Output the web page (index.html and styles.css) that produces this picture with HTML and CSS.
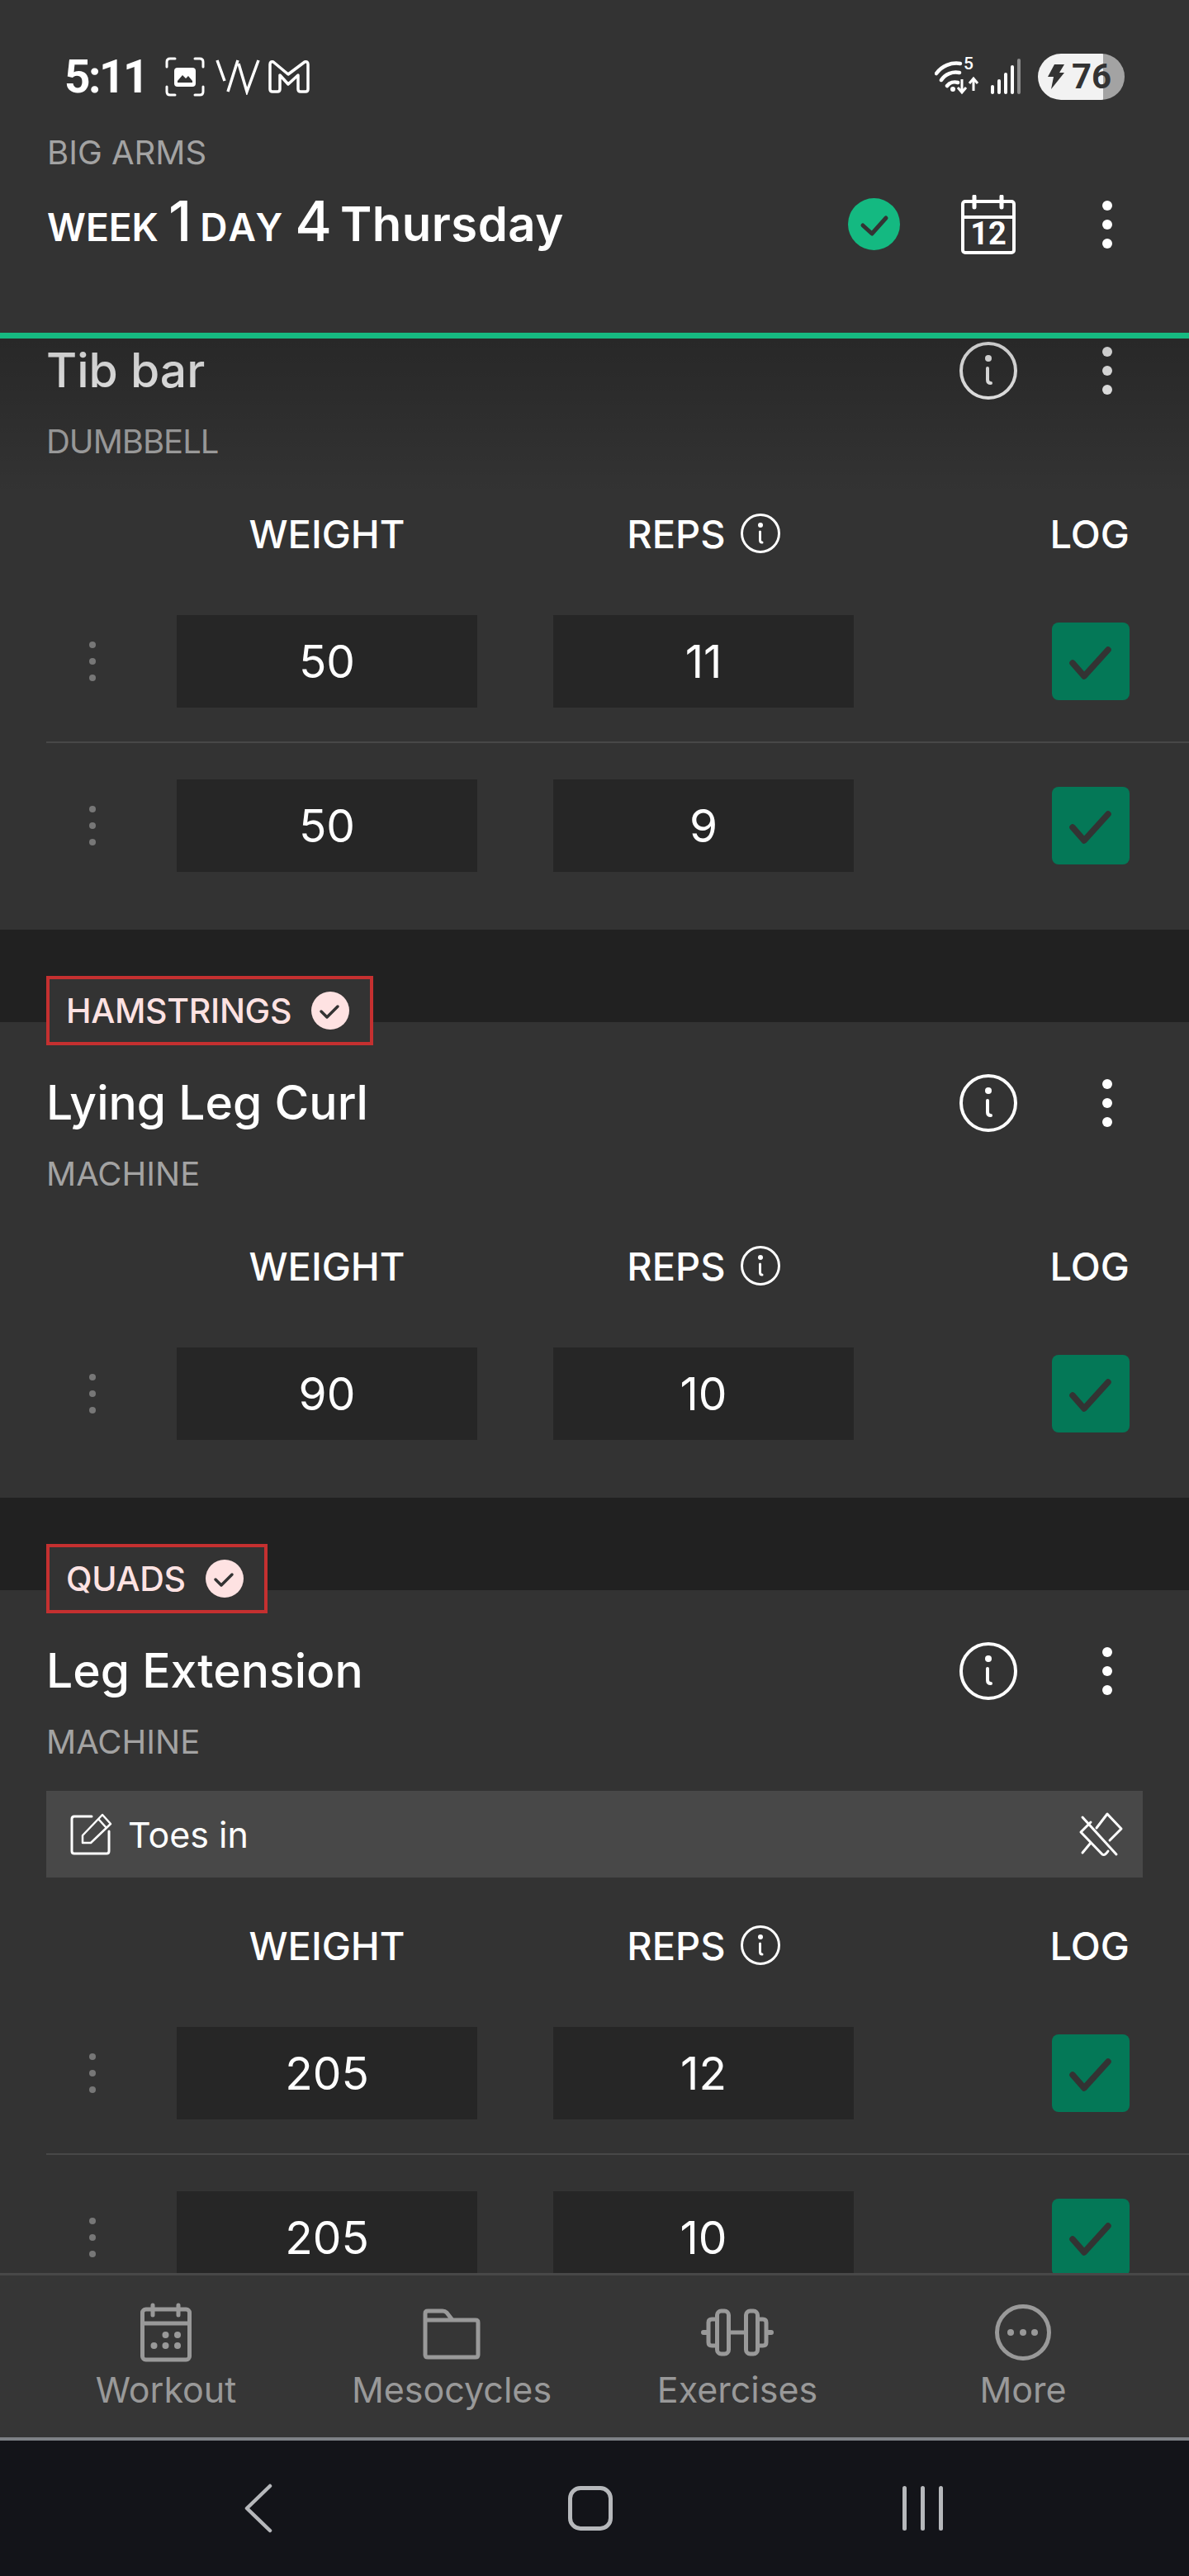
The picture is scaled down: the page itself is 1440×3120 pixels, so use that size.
FILE: index.html
```html
<!DOCTYPE html>
<html lang="en">
<head>
    <meta charset="UTF-8">
    <meta name="viewport" content="width=device-width, initial-scale=1.0">
    <title>Big Arms - Week 1 Day 4</title>
    <link rel="stylesheet" href="styles.css">
</head>
<body>

    <!-- Icons used more than once -->
    <svg class="sprite" aria-hidden="true">
        <symbol id="icon-info" viewBox="0 0 70 70">
            <circle cx="35" cy="35" r="33" fill="none" stroke="currentColor" stroke-width="4"/>
            <circle cx="35" cy="20" r="4" fill="currentColor"/>
            <path d="M34 32 V46 Q34 50 38 50" fill="none" stroke="currentColor" stroke-width="4" stroke-linecap="round"/>
        </symbol>
        <symbol id="icon-info-small" viewBox="0 0 48 48">
            <circle cx="24" cy="24" r="22.500" fill="none" stroke="currentColor" stroke-width="3"/>
            <circle cx="24" cy="14" r="3" fill="currentColor"/>
            <path d="M23.500 22 V32 Q23.500 35 26 35" fill="none" stroke="currentColor" stroke-width="3" stroke-linecap="round"/>
        </symbol>
        <symbol id="icon-kebab" viewBox="0 0 12 58">
            <circle cx="6" cy="6" r="6" fill="currentColor"/>
            <circle cx="6" cy="29" r="6" fill="currentColor"/>
            <circle cx="6" cy="52" r="6" fill="currentColor"/>
        </symbol>
        <symbol id="icon-check" viewBox="0 0 94 94">
            <path d="M25 49 L39 65 L68 33" fill="none" stroke="currentColor" stroke-width="7.500" stroke-linecap="round" stroke-linejoin="round"/>
        </symbol>
    </svg>

    <div class="phone">

        <!-- Status bar and title -->
        <header class="top-bar">
            <div class="status-bar">
                <span class="status-time">5:11</span>
                <svg class="status-shot" viewBox="0 0 48 48">
                    <path d="M2 12 V6 Q2 2 6 2 H12 M36 2 H42 Q46 2 46 6 V12 M46 36 V42 Q46 46 42 46 H36 M12 46 H6 Q2 46 2 42 V36" fill="none" stroke="#fff" stroke-width="3" stroke-linecap="round"/>
                    <rect x="11" y="13" width="26" height="23" rx="4" fill="#fff"/>
                    <path d="M15 29 L21 22 L25 26 L28 23 L33 29 V31 H15 Z" fill="#333"/>
                </svg>
                <svg class="status-w" viewBox="0 0 54 44">
                    <path d="M2 2 L11 27 M27 2 L15 40 M28 6 L38 40 L52 2" fill="none" stroke="#fff" stroke-width="3.500"/>
                </svg>
                <svg class="status-m" viewBox="0 0 52 43">
                    <path d="M3 36 V6 Q3 2 7 3 L25 18 L45 3 Q49 2 49 6 V36 Q49 39 46 39 H40 Q37 39 37 36 V19 L25 30 L15 19 V36 Q15 39 12 39 H6 Q3 39 3 36 Z" fill="none" stroke="#fff" stroke-width="3.500" stroke-linejoin="round"/>
                </svg>
                <div class="status-right">
                    <svg class="status-wifi" viewBox="0 0 58 44">
                        <path d="M2 18 A30 30 0 0 1 31 6 M8 26 A21 21 0 0 1 30 17 M15 33 A12 12 0 0 1 28 29" fill="none" stroke="#fff" stroke-width="4.500" stroke-linecap="round"/>
                        <circle cx="22" cy="37" r="3" fill="#fff"/>
                        <path d="M33 25 V40 M28 35 L33 41 L38 35 M47 39 V25 M42 30 L47 24 L52 30" fill="none" stroke="#fff" stroke-width="3"/>
                    </svg>
                    <span class="status-wifi-num">5</span>
                    <svg class="status-signal" viewBox="0 0 38 44">
                        <rect x="1" y="32" width="4" height="11" rx="2" fill="#fff"/>
                        <rect x="9" y="25" width="4" height="18" rx="2" fill="#fff"/>
                        <rect x="17" y="17" width="4" height="26" rx="2" fill="#fff"/>
                        <rect x="25" y="8" width="4" height="35" rx="2" fill="#fff"/>
                        <rect x="33" y="0" width="4" height="43" rx="2" fill="#8c8c8c"/>
                    </svg>
                    <div class="battery">
                        <svg class="battery-bolt" viewBox="0 0 20 30">
                            <path d="M8 0 H20 L14 10 H20 L4 30 L7 15 H0 Z" fill="#333"/>
                        </svg>
                        <span class="battery-num">76</span>
                    </div>
                </div>
            </div>

            <div class="workout-title">
                <div class="title-text">
                    <div class="meso-name">BIG ARMS</div>
                    <div class="day-name">
                        <span class="day-label">WEEK</span>
                        <span class="day-num">1</span>
                        <span class="day-label day-label-wide">DAY</span>
                        <span class="day-num">4</span>
                        <span class="day-word">Thursday</span>
                    </div>
                </div>
                <svg class="done-icon" viewBox="0 0 63 63">
                    <circle cx="31.500" cy="31.500" r="31.500" fill="#14b981"/>
                    <path d="M18 33 L29 43 L46 24" fill="none" stroke="#333" stroke-width="5" stroke-linecap="round" stroke-linejoin="round"/>
                </svg>
                <svg class="calendar-icon" viewBox="0 0 66 72">
                    <rect x="2" y="8" width="62" height="62" rx="3" fill="none" stroke="#fff" stroke-width="4"/>
                    <path d="M2 27 H64" stroke="#fff" stroke-width="4"/>
                    <path d="M16 2 V15 M49 2 V15" stroke="#fff" stroke-width="5" stroke-linecap="round"/>
                    <text class="calendar-day" x="33" y="60" text-anchor="middle">12</text>
                </svg>
                <svg class="kebab kebab-head"><use href="#icon-kebab"/></svg>
            </div>
            <div class="progress-line"></div>
        </header>

        <!-- Exercise list -->
        <main class="exercise-list">
            <div class="scroll-fade"></div>

            <section class="exercise-card first-card">
                <div class="exercise-head">
                    <h2 class="exercise-name">Tib bar</h2>
                    <svg class="info-icon"><use href="#icon-info"/></svg>
                    <svg class="kebab"><use href="#icon-kebab"/></svg>
                </div>
                <div class="exercise-type type-tight">DUMBBELL</div>
                <div class="set-grid set-head">
                    <span></span>
                    <span class="col-title">WEIGHT</span>
                    <span class="col-title">REPS <svg class="info-small"><use href="#icon-info-small"/></svg></span>
                    <span class="col-title col-log">LOG</span>
                </div>
                <div class="set-grid set-row">
                    <span class="drag-dots"><i></i><i></i><i></i></span>
                    <div class="set-input">50</div>
                    <div class="set-input">11</div>
                    <div class="log-box"><svg><use href="#icon-check"/></svg></div>
                </div>
                <div class="set-grid set-row">
                    <span class="drag-dots"><i></i><i></i><i></i></span>
                    <div class="set-input">50</div>
                    <div class="set-input">9</div>
                    <div class="log-box"><svg><use href="#icon-check"/></svg></div>
                </div>
            </section>

            <div class="muscle-gap">
                <div class="muscle-tag">
                    <span>HAMSTRINGS</span>
                    <svg class="tag-check" viewBox="0 0 46 46">
                        <circle cx="23" cy="23" r="23" fill="#fee2e2"/>
                        <path d="M12 24 L19 31 L32 18" fill="none" stroke="#333" stroke-width="3.500" stroke-linecap="round" stroke-linejoin="round"/>
                    </svg>
                </div>
            </div>

            <section class="exercise-card">
                <div class="exercise-head">
                    <h2 class="exercise-name">Lying Leg Curl</h2>
                    <svg class="info-icon"><use href="#icon-info"/></svg>
                    <svg class="kebab"><use href="#icon-kebab"/></svg>
                </div>
                <div class="exercise-type">MACHINE</div>
                <div class="set-grid set-head">
                    <span></span>
                    <span class="col-title">WEIGHT</span>
                    <span class="col-title">REPS <svg class="info-small"><use href="#icon-info-small"/></svg></span>
                    <span class="col-title col-log">LOG</span>
                </div>
                <div class="set-grid set-row">
                    <span class="drag-dots"><i></i><i></i><i></i></span>
                    <div class="set-input">90</div>
                    <div class="set-input">10</div>
                    <div class="log-box"><svg><use href="#icon-check"/></svg></div>
                </div>
            </section>

            <div class="muscle-gap">
                <div class="muscle-tag">
                    <span>QUADS</span>
                    <svg class="tag-check" viewBox="0 0 46 46">
                        <circle cx="23" cy="23" r="23" fill="#fee2e2"/>
                        <path d="M12 24 L19 31 L32 18" fill="none" stroke="#333" stroke-width="3.500" stroke-linecap="round" stroke-linejoin="round"/>
                    </svg>
                </div>
            </div>

            <section class="exercise-card">
                <div class="exercise-head">
                    <h2 class="exercise-name">Leg Extension</h2>
                    <svg class="info-icon"><use href="#icon-info"/></svg>
                    <svg class="kebab"><use href="#icon-kebab"/></svg>
                </div>
                <div class="exercise-type">MACHINE</div>
                <div class="note-bar">
                    <svg class="note-edit" viewBox="0 0 52 52">
                        <path d="M27 4 H6 Q3 4 3 7 V46 Q3 49 6 49 H45 Q48 49 48 46 V22" fill="none" stroke="#fff" stroke-width="3" stroke-linecap="round"/>
                        <path d="M16 36 V27 L40 2 L50 13 L26 36 Z M35 7 L45 18" fill="none" stroke="#fff" stroke-width="2.500" stroke-linejoin="round"/>
                    </svg>
                    <span class="note-text">Toes in</span>
                    <svg class="note-pin" viewBox="0 0 60 60">
                        <path d="M6 9 L47 54 M23 22 L36 5 L53 23 L39 37 M16 15 L4 27 L30 54 Q33 56 37 50 M16 40 L6 52" fill="none" stroke="#fff" stroke-width="3" stroke-linecap="round" stroke-linejoin="round"/>
                    </svg>
                </div>
                <div class="set-grid set-head">
                    <span></span>
                    <span class="col-title">WEIGHT</span>
                    <span class="col-title">REPS <svg class="info-small"><use href="#icon-info-small"/></svg></span>
                    <span class="col-title col-log">LOG</span>
                </div>
                <div class="set-grid set-row">
                    <span class="drag-dots"><i></i><i></i><i></i></span>
                    <div class="set-input">205</div>
                    <div class="set-input">12</div>
                    <div class="log-box"><svg><use href="#icon-check"/></svg></div>
                </div>
                <div class="set-grid set-row">
                    <span class="drag-dots"><i></i><i></i><i></i></span>
                    <div class="set-input">205</div>
                    <div class="set-input">10</div>
                    <div class="log-box"><svg><use href="#icon-check"/></svg></div>
                </div>
            </section>
        </main>

        <!-- Bottom tabs -->
        <nav class="tab-bar">
            <div class="tab-item">
                <svg class="tab-icon" viewBox="0 0 64 72" width="64" height="72">
                    <rect x="3.500" y="8" width="57" height="61" rx="4" fill="none" stroke="currentColor" stroke-width="5"/>
                    <path d="M3 25 H61" stroke="currentColor" stroke-width="5"/>
                    <path d="M16 3 V15 M47 3 V15" stroke="currentColor" stroke-width="5" stroke-linecap="round"/>
                    <circle cx="31.500" cy="39" r="4" fill="currentColor"/>
                    <circle cx="46" cy="39" r="4" fill="currentColor"/>
                    <circle cx="17.500" cy="52" r="4" fill="currentColor"/>
                    <circle cx="31.500" cy="52" r="4" fill="currentColor"/>
                    <circle cx="46" cy="52" r="4" fill="currentColor"/>
                </svg>
                <span>Workout</span>
            </div>
            <div class="tab-item">
                <svg class="tab-icon" viewBox="0 0 72 72" width="72" height="72">
                    <path d="M4 13 Q4 10 7 10 H25 Q28 10 30 12 L37 21 H65 Q68 21 68 24 V63 Q68 66 65 66 H7 Q4 66 4 63 Z M4 21 H37" fill="none" stroke="currentColor" stroke-width="5" stroke-linejoin="round"/>
                </svg>
                <span>Mesocycles</span>
            </div>
            <div class="tab-item">
                <svg class="tab-icon" viewBox="0 0 88 72" width="88" height="72">
                    <rect x="19.500" y="10" width="14" height="52" rx="5" fill="none" stroke="currentColor" stroke-width="5"/>
                    <rect x="54.500" y="10" width="14" height="52" rx="5" fill="none" stroke="currentColor" stroke-width="5"/>
                    <path d="M19 20 H13 Q9 20 9 24 V48 Q9 52 13 52 H19 M69 20 H75 Q79 20 79 24 V48 Q79 52 75 52 H69" fill="none" stroke="currentColor" stroke-width="5"/>
                    <path d="M34 36 H54" stroke="currentColor" stroke-width="5"/>
                    <path d="M3 36 H8 M80 36 H85" stroke="currentColor" stroke-width="6" stroke-linecap="round"/>
                </svg>
                <span>Exercises</span>
            </div>
            <div class="tab-item">
                <svg class="tab-icon" viewBox="0 0 72 72" width="72" height="72">
                    <circle cx="36" cy="36" r="31.500" fill="none" stroke="currentColor" stroke-width="5"/>
                    <circle cx="21" cy="36" r="4" fill="currentColor"/>
                    <circle cx="36" cy="36" r="4" fill="currentColor"/>
                    <circle cx="50" cy="36" r="4" fill="currentColor"/>
                </svg>
                <span>More</span>
            </div>
        </nav>

        <!-- Android buttons -->
        <footer class="system-nav">
            <svg class="sys-back" viewBox="0 0 36 60">
                <path d="M32 3 L4 30 L32 57" fill="none" stroke="#b6b8bb" stroke-width="4.500" stroke-linecap="round" stroke-linejoin="round"/>
            </svg>
            <div class="sys-home"></div>
            <div class="sys-recent"><i></i><i></i><i></i></div>
        </footer>

    </div>

</body>
</html>
```
FILE: styles.css
```css
/* Page frame */
* {
    box-sizing: border-box;
}

body {
    margin: 0;
    background-color: #333;
    font-family: Inter, "Noto Sans", sans-serif;
    color: #fff;
}

.sprite {
    display: none;
}

.phone {
    display: flex;
    flex-direction: column;
    width: 1440px;
    height: 3120px;
    overflow: hidden;
}

/* Status bar */
.top-bar {
    flex: none;
    height: 410px;
    display: flex;
    flex-direction: column;
    background-color: #333;
}

.status-bar {
    height: 140px;
    display: flex;
    align-items: center;
    padding: 46px 78px 0 78px;
    flex: none;
}

.status-time {
    width: 122px;
    font-family: Roboto, sans-serif;
    font-size: 55px;
    font-weight: 700;
    letter-spacing: -2.5px;
    line-height: 1;
}

.status-shot {
    width: 48px;
    height: 48px;
}

.status-w {
    width: 54px;
    height: 44px;
    margin-left: 13px;
}

.status-m {
    width: 52px;
    height: 43px;
    margin-left: 9px;
}

.status-right {
    position: relative;
    display: flex;
    align-items: center;
    margin-left: auto;
}

.status-wifi {
    width: 58px;
    height: 44px;
}

.status-wifi-num {
    position: absolute;
    left: 35px;
    top: 0;
    font-family: Roboto, sans-serif;
    font-size: 21px;
    font-weight: 500;
}

.status-signal {
    width: 38px;
    height: 44px;
    margin-left: 9px;
}

.battery {
    width: 105px;
    height: 56px;
    margin-left: 20px;
    padding-left: 12px;
    display: flex;
    align-items: center;
    gap: 9px;
    border-radius: 28px;
    background: linear-gradient(to right, #f2f2f2 79px, #a3a3a3 79px);
    color: #333;
}

.battery-bolt {
    width: 20px;
    height: 30px;
    flex: none;
}

.battery-num {
    font-family: Roboto, sans-serif;
    font-size: 42px;
    font-weight: 700;
    line-height: 1;
}

/* Workout title */
.workout-title {
    display: flex;
    align-items: center;
    flex: 1;
    padding: 0 0 0 57px;
    position: relative;
}

.title-text {
    align-self: flex-start;
    margin-right: auto;
    margin-top: 17px;
}

.meso-name {
    margin-bottom: 16px;
    font-size: 40px;
    line-height: 56px;
    color: #a3a3a3;
}

.day-name {
    display: flex;
    align-items: baseline;
    height: 76px;
    line-height: 76px;
    white-space: nowrap;
}

.day-label {
    font-size: 46px;
    font-weight: 600;
}

.day-label-wide {
    letter-spacing: 3px;
}

.day-num {
    font-size: 68px;
    font-weight: 500;
    margin: 0 10px 0 12px;
}

.day-word {
    font-size: 58px;
    font-weight: 600;
    letter-spacing: 0.5px;
}

.done-icon {
    width: 63px;
    height: 63px;
    margin-right: 74px;
}

.calendar-icon {
    width: 66px;
    height: 72px;
    margin-right: 105px;
}

.calendar-day {
    font-family: Roboto, sans-serif;
    font-size: 38px;
    font-weight: 700;
    fill: #fff;
}

.kebab {
    width: 12px;
    height: 58px;
    color: #fff;
    flex: none;
}

.kebab-head {
    margin-right: 93px;
}

.progress-line {
    flex: none;
    height: 7px;
    background-color: #16b981;
}

/* Exercise cards */
.exercise-list {
    position: relative;
    flex: 1;
    min-height: 0;
    overflow: hidden;
    background-color: #212121;
}

.scroll-fade {
    position: absolute;
    top: 0;
    left: 0;
    right: 0;
    height: 190px;
    background: linear-gradient(to bottom, rgba(0, 0, 0, 0.22), rgba(0, 0, 0, 0));
    z-index: 2;
}

.exercise-card {
    background-color: #333;
    padding-top: 56px;
    padding-bottom: 27px;
}

.first-card {
    margin-top: -59px;
}

.exercise-head {
    display: flex;
    align-items: center;
    height: 84px;
    padding: 0 93px 0 56px;
}

.exercise-name {
    margin: 0 auto 0 0;
    font-size: 57px;
    font-weight: 500;
    line-height: 84px;
}

.info-icon {
    width: 70px;
    height: 70px;
    margin-right: 103px;
    color: #fff;
}

.exercise-type {
    margin-top: 14px;
    padding-left: 56px;
    font-size: 40px;
    line-height: 60px;
    color: #a3a3a3;
}

.type-tight {
    letter-spacing: -1px;
}

/* Notes */
.note-bar {
    display: flex;
    align-items: center;
    height: 105px;
    margin: 29px 56px 0;
    padding: 0 19px 0 28px;
    background-color: #484848;
}

.note-edit {
    width: 52px;
    height: 52px;
}

.note-text {
    margin-left: 19px;
    margin-right: auto;
    font-size: 43px;
}

.note-pin {
    width: 60px;
    height: 60px;
}

.note-bar + .set-head {
    margin-top: 47px;
}

/* Sets */
.set-grid {
    display: grid;
    grid-template-columns: 66px 364px 364px 1fr;
    column-gap: 92px;
    align-items: center;
    margin-left: 56px;
    padding-right: 72px;
}

.set-head {
    height: 70px;
    margin-top: 46px;
    margin-bottom: 20px;
}

.col-title {
    display: flex;
    align-items: center;
    justify-content: center;
    font-size: 47px;
    font-weight: 500;
}

.col-log {
    justify-content: flex-end;
}

.info-small {
    width: 48px;
    height: 48px;
    margin-left: 18px;
    color: #fff;
}

.set-row {
    padding-top: 44px;
    padding-bottom: 41px;
    border-bottom: 2px solid #484848;
}

.set-row:last-child {
    border-bottom-color: transparent;
}

.drag-dots {
    display: flex;
    flex-direction: column;
    gap: 12px;
    margin-left: 52px;
}

.drag-dots i {
    width: 8px;
    height: 8px;
    border-radius: 50%;
    background-color: #777;
}

.set-input {
    height: 112px;
    display: flex;
    align-items: center;
    justify-content: center;
    background-color: #262626;
    font-size: 55px;
}

.log-box {
    justify-self: end;
    width: 94px;
    height: 94px;
    border-radius: 8px;
    background-color: #047857;
    color: #333;
}

.log-box svg {
    display: block;
    width: 94px;
    height: 94px;
}

/* Muscle group label */
.muscle-gap {
    height: 112px;
    padding-top: 56px;
}

.muscle-tag {
    position: relative;
    z-index: 1;
    display: inline-flex;
    align-items: center;
    gap: 24px;
    height: 84px;
    margin-left: 56px;
    padding: 0 25px 0 20px;
    border: 4px solid #c53030;
    background-color: #333;
    font-size: 41px;
    font-weight: 500;
    letter-spacing: -0.3px;
    color: #fee2e2;
}

.tag-check {
    width: 46px;
    height: 46px;
}

/* Tab bar */
.tab-bar {
    flex: none;
    height: 203px;
    display: grid;
    grid-template-columns: repeat(4, 1fr);
    padding: 0 28px;
    background-color: #363636;
    border-top: 3px solid #484848;
    border-bottom: 4px solid #7d8085;
    color: #999;
}

.tab-item {
    display: flex;
    flex-direction: column;
    align-items: center;
    padding-top: 33px;
    font-size: 43px;
    line-height: 58px;
}

.tab-icon {
    flex: none;
    margin-bottom: 4px;
}

/* Android nav */
.system-nav {
    flex: none;
    height: 164px;
    display: flex;
    align-items: center;
    background-color: #131419;
}

.sys-back {
    width: 36px;
    height: 60px;
    margin-left: 295px;
}

.sys-home {
    width: 54px;
    height: 54px;
    margin-left: 357px;
    border: 5px solid #b6b8bb;
    border-radius: 15px;
}

.sys-recent {
    display: flex;
    gap: 17px;
    margin-left: 351px;
}

.sys-recent i {
    width: 5px;
    height: 54px;
    border-radius: 3px;
    background-color: #b6b8bb;
}
```
